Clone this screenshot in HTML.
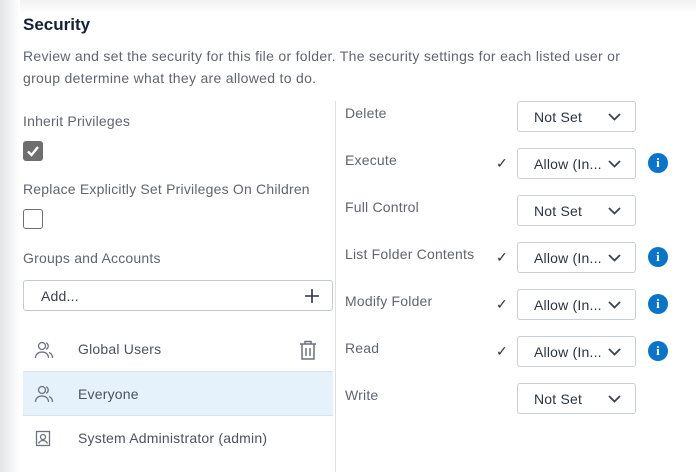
<!DOCTYPE html>
<html><head><meta charset="utf-8"><style>
*{box-sizing:border-box;margin:0;padding:0}
html,body{width:696px;height:472px;overflow:hidden;background:#fff;font-family:"Liberation Sans",sans-serif;letter-spacing:0.2px}
.shade{position:absolute;left:0;top:0;width:20px;height:472px;background:linear-gradient(90deg,#e4e5e7,#fff)}
.shadet{position:absolute;left:0;top:0;width:696px;height:14px;background:linear-gradient(180deg,#f1f1f2,#fff)}
.a{position:absolute}
h1{position:absolute;left:23px;top:15px;font-size:17px;font-weight:bold;color:#152036;letter-spacing:0}
.desc{left:23px;top:45px;width:620px;font-size:14px;line-height:22px;color:#5f6670;letter-spacing:0.3px}
.lbl{font-size:14px;color:#5f6670}
.cb{width:20px;height:20px;border-radius:3px}
.div{left:335px;top:101px;width:1px;height:371px;background:#dcdfe3}
.sel{position:absolute;left:517px;width:119px;height:31px;border:1px solid #c9cfd6;border-radius:3px;font-size:14px;color:#2b3442;padding-left:16px;line-height:30px}
.sel svg{position:absolute;right:14px;top:11px}
.chk{position:absolute;left:496px;font-size:14px;color:#2b3442}
.info{position:absolute;left:648px;width:20px;height:20px;border-radius:50%;background:#0a74c9;color:#fff;font-weight:bold;font-size:13px;text-align:center;line-height:20px;font-family:"Liberation Serif",serif}
.row{position:absolute;left:23px;width:310px;height:45px;font-size:14px;color:#4a5260;line-height:45px;padding-left:55px}
.row svg{position:absolute;left:11px;top:13px}
</style></head><body>
<div class="shadet"></div><div class="shade"></div>
<h1>Security</h1>
<div class="a desc">Review and set the security for this file or folder. The security settings for each listed user or group determine what they are allowed to do.</div>
<div class="a lbl" style="left:23px;top:113px">Inherit Privileges</div>
<div class="a cb" style="left:23px;top:141px;background:#6e6e6e"><svg width="20" height="20"><path d="M5 10.5l3.5 3.5 6.5-8" stroke="#fff" stroke-width="2.4" fill="none"/></svg></div>
<div class="a lbl" style="left:23px;top:181px">Replace Explicitly Set Privileges On Children</div>
<div class="a cb" style="left:23px;top:209px;border:1px solid #6e6e6e"></div>
<div class="a lbl" style="left:23px;top:250px">Groups and Accounts</div>
<div class="a" style="left:23px;top:280px;width:310px;height:31px;border:1px solid #c4cad1;border-radius:3px;font-size:14px;color:#3a4250;padding-left:17px;line-height:30px">Add...
<svg style="position:absolute;right:13px;top:8px" width="14" height="14"><path d="M7 0v14M0 7h14" stroke="#2b3442" stroke-width="1.6"/></svg></div>
<div class="row" style="top:327px">Global Users
<svg width="20" height="20" viewBox="0 0 20 20" fill="none" stroke="#6a7280" stroke-width="1.3"><circle cx="8" cy="6" r="3.5"/><path d="M1.5 18c0-4 3-6 6.5-6s6.5 2 6.5 6"/><path d="M12 2.8a3.5 3.5 0 0 1 0 6.5M15 12.5c2 .8 3.5 2.8 3.5 5.5"/></svg>
<svg style="left:276px;top:13px" width="18" height="20" viewBox="0 0 18 20" fill="none" stroke="#6a7280" stroke-width="1.5"><path d="M1 4h16M6 4V1.5h6V4M3 4v15h12V4M7 8v8M11 8v8"/></svg></div>
<div class="row" style="top:371px;background:#e5f1fb;border-top:1px solid #d5e4ef;border-bottom:1px solid #d5e4ef;line-height:44px">Everyone
<svg width="20" height="20" viewBox="0 0 20 20" fill="none" stroke="#6a7280" stroke-width="1.3" style="top:12px"><circle cx="8" cy="6" r="3.5"/><path d="M1.5 18c0-4 3-6 6.5-6s6.5 2 6.5 6"/><path d="M12 2.8a3.5 3.5 0 0 1 0 6.5M15 12.5c2 .8 3.5 2.8 3.5 5.5"/></svg></div>
<div class="row" style="top:416px">System Administrator (admin)
<svg width="18" height="18" viewBox="0 0 18 18" fill="none" stroke="#6a7280" stroke-width="1.3" style="top:14px;left:12px"><rect x="1.5" y="1.5" width="13" height="14"/><circle cx="8" cy="7" r="2.5"/><path d="M3.5 13.5c1-2 2.5-3 4.5-3s3.5 1 4.5 3"/></svg></div>
<div class="a div"></div>

<div class="a lbl" style="left:345px;top:105px">Delete</div>
<div class="a lbl" style="left:345px;top:152px">Execute</div>
<div class="a lbl" style="left:345px;top:199px">Full Control</div>
<div class="a lbl" style="left:345px;top:246px">List Folder Contents</div>
<div class="a lbl" style="left:345px;top:293px">Modify Folder</div>
<div class="a lbl" style="left:345px;top:340px">Read</div>
<div class="a lbl" style="left:345px;top:387px">Write</div>

<div class="sel" style="top:101px">Not Set<svg width="13" height="8"><path d="M1 1l5.5 5.5L12 1" stroke="#3a4250" stroke-width="1.8" fill="none"/></svg></div>
<div class="chk" style="top:155px">✓</div><div class="sel" style="top:148px">Allow (In...<svg width="13" height="8"><path d="M1 1l5.5 5.5L12 1" stroke="#3a4250" stroke-width="1.8" fill="none"/></svg></div><div class="info" style="top:153px">i</div>
<div class="sel" style="top:195px">Not Set<svg width="13" height="8"><path d="M1 1l5.5 5.5L12 1" stroke="#3a4250" stroke-width="1.8" fill="none"/></svg></div>
<div class="chk" style="top:249px">✓</div><div class="sel" style="top:242px">Allow (In...<svg width="13" height="8"><path d="M1 1l5.5 5.5L12 1" stroke="#3a4250" stroke-width="1.8" fill="none"/></svg></div><div class="info" style="top:247px">i</div>
<div class="chk" style="top:296px">✓</div><div class="sel" style="top:289px">Allow (In...<svg width="13" height="8"><path d="M1 1l5.5 5.5L12 1" stroke="#3a4250" stroke-width="1.8" fill="none"/></svg></div><div class="info" style="top:294px">i</div>
<div class="chk" style="top:343px">✓</div><div class="sel" style="top:336px">Allow (In...<svg width="13" height="8"><path d="M1 1l5.5 5.5L12 1" stroke="#3a4250" stroke-width="1.8" fill="none"/></svg></div><div class="info" style="top:341px">i</div>
<div class="sel" style="top:383px">Not Set<svg width="13" height="8"><path d="M1 1l5.5 5.5L12 1" stroke="#3a4250" stroke-width="1.8" fill="none"/></svg></div>
</body></html>
